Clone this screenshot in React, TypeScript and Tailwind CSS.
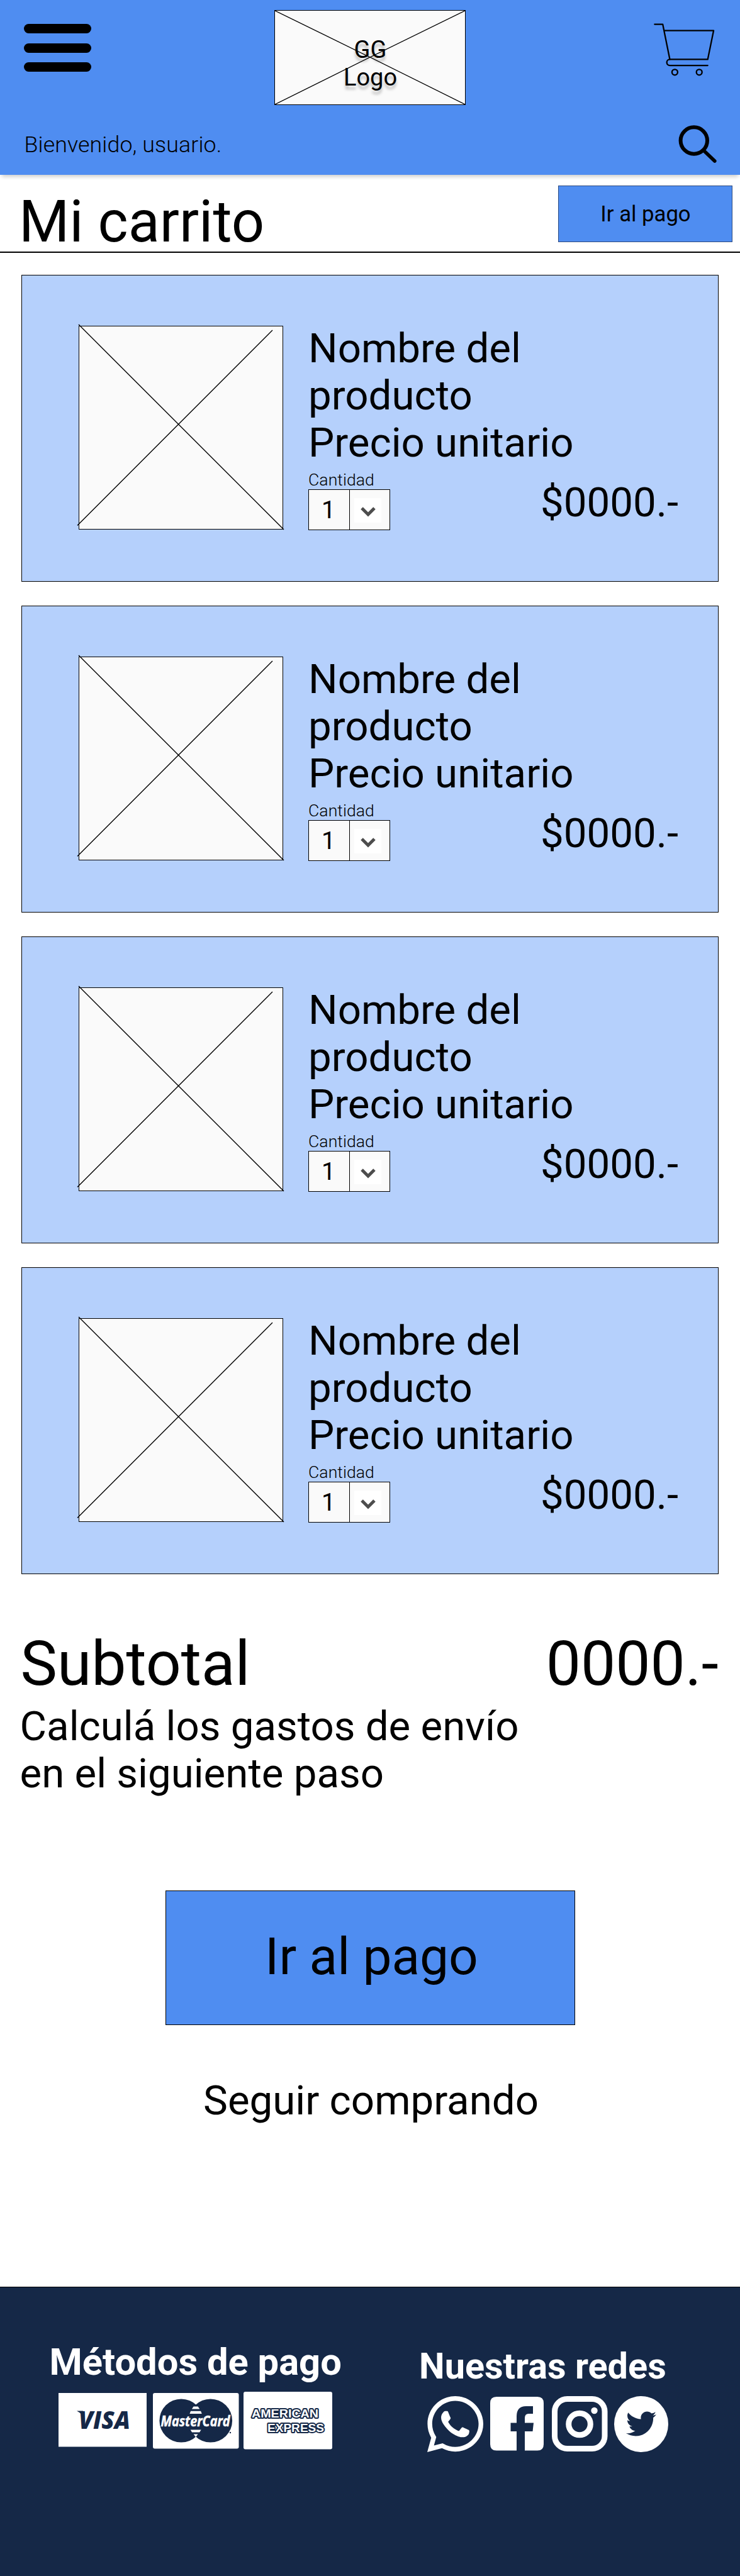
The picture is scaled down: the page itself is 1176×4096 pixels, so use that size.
import { FaTwitter, FaWhatsapp } from "react-icons/fa";

function CartIcon() {
  return (
    <svg className="mt-[37px] h-[85px] w-[98px]" viewBox="0 0 98 85" fill="none" stroke="#000" strokeWidth="2.300" strokeLinecap="round" strokeLinejoin="round">
      <path d="M2.300 1.600H15.200L26.500 57.400H86.700L96.100 11.600H18" />
      <path d="M26.500 57.400a4.850 4.850 0 0 0 0 9.700H86.700" />
      <circle cx="34.400" cy="77.800" r="4.500" />
      <circle cx="73.200" cy="77.800" r="4.500" />
    </svg>
  );
}

function SearchIcon() {
  return (
    <svg className="h-[61px] w-[61px]" viewBox="0 0 61 61" fill="none" stroke="#000" strokeLinecap="round">
      <circle cx="24.800" cy="24.500" r="21.200" strokeWidth="6" />
      <path d="M41 41L57.800 57" strokeWidth="5.600" />
    </svg>
  );
}

function Header() {
  return (
    <header className="h-[277.500px] bg-[#4f8df1] shadow-[0_6px_6px_-3px_rgba(0,0,0,0.2)]">
      <div className="flex h-[168px] items-start justify-between pr-[40px] pl-[38px]">
        <div className="mt-[38px] flex w-[107px] flex-col gap-[15.300px]">
          <div className="h-[15.300px] rounded-full bg-black" />
          <div className="h-[15.300px] rounded-full bg-black" />
          <div className="h-[15.300px] rounded-full bg-black" />
        </div>
        <div className="relative mt-[16px] ml-[-8px] h-[151px] w-[304px] border-[1.500px] border-black bg-[#fafafa]">
          <svg className="absolute inset-0 h-full w-full" viewBox="0 0 302 149" fill="none" stroke="#000" strokeWidth="1.300" preserveAspectRatio="none">
            <path d="M0 0L151 74L302 0M0 149L151 74L302 149" />
          </svg>
          <div className="relative mt-[40px] pl-[2px] text-center text-[38px] leading-[44px] [text-shadow:0_6px_4px_rgba(0,0,0,0.250)]">
            GG
            <br />
            Logo
          </div>
        </div>
        <CartIcon />
      </div>
      <div className="flex h-[109px] items-center justify-between pr-[37px] pl-[38.500px]">
        <p className="mt-[15px] text-[35.700px] leading-[40px] font-light tracking-[0.120px]">Bienvenido, usuario.</p>
        <div className="mt-[14px]">
          <SearchIcon />
        </div>
      </div>
    </header>
  );
}

function ProductCard() {
  return (
    <article className="flex h-[488px] border-[1.500px] border-black bg-[#b5d0fc]">
      <div className="relative mt-[80px] ml-[90px] h-[324px] w-[325px] shrink-0 border-[1.500px] border-black bg-[#fafafa]">
        <svg className="absolute inset-0 h-full w-full overflow-visible" viewBox="0 0 323 322" fill="none" stroke="#000" strokeWidth="1.400">
          <path d="M-1 -3L325 323M307 6L-3 316.500" />
        </svg>
      </div>
      <div className="ml-[40px] flex-1 pt-[77.500px]">
        <p className="text-[65.400px] leading-[75px]">
          Nombre del
          <br />
          producto
          <br />
          Precio unitario
        </p>
        <div className="flex justify-between pr-[63px]">
          <div className="pt-[7px]">
            <p className="text-[26.600px] leading-[30px] font-light tracking-[0.050px]">Cantidad</p>
            <div className="mt-[0.500px] flex h-[65px] w-[130px] border-[1.500px] border-black bg-[#fafafa]">
              <div className="flex w-[65px] items-center justify-center border-r-[1.500px] border-black pt-[1px] pr-[2px] text-[39px]">1</div>
              <div className="mt-[13px] ml-[7px] flex h-[39px] w-[43px] items-center justify-center bg-white">
                <svg className="mt-[5px] h-[16px] w-[24px]" viewBox="0 0 24 16" fill="none" stroke="#4d4d4d" strokeWidth="5">
                  <path d="M2 2L12 12L22 2" />
                </svg>
              </div>
            </div>
          </div>
          <p className="mt-[20.500px] text-[65.400px] leading-[75px]">$0000.-</p>
        </div>
      </div>
    </article>
  );
}

function VisaCard() {
  return (
    <svg className="mt-[2px] h-[85.500px] w-[140px]" viewBox="0 0 140 85.500">
      <rect width="140" height="85.500" fill="#fff" />
      <text x="32" y="56.500" fontFamily="Open Sans" fontWeight="800" fontStyle="italic" fontSize="39" textLength="82" lengthAdjust="spacingAndGlyphs" fill="#152847">
        VISA
      </text>
      <path d="M29 28.500h10l2 12q-4-8-12-12z" fill="#152847" />
    </svg>
  );
}

function MasterCard() {
  return (
    <svg className="mt-[2px] ml-[10px] h-[88.500px] w-[136.500px] overflow-visible" viewBox="0 0 136.500 88.500">
      <rect width="136.500" height="88.500" rx="3" fill="#fff" />
      <circle cx="45" cy="44" r="34.600" fill="#152847" />
      <circle cx="91.500" cy="44" r="34.600" fill="#152847" />
      <path d="M64.600 21.600h7l2.700 4h-12.400zM60.100 28.700h16l1.700 4.400h-19.400zM59.600 58.600h17l-2.500 4h-12zM64.600 65.500h7l-3.500 4.500z" fill="#fff" />
      <text x="12.500" y="52.500" fontFamily="Open Sans" fontWeight="700" fontStyle="italic" fontSize="23.500" textLength="110" lengthAdjust="spacingAndGlyphs" fill="#fff" stroke="#fff" strokeWidth="0.500">
        MasterCard
      </text>
      <circle cx="123" cy="63" r="1.200" fill="#152847" />
    </svg>
  );
}

function AmexCard() {
  return (
    <svg className="ml-[7px] h-[91.500px] w-[141px]" viewBox="0 0 141 91.500">
      <rect width="141" height="91.500" rx="3" fill="#fff" />
      <g fontFamily="Liberation Sans" fontWeight="700" fontSize="18.600" fill="#fff" stroke="#152847" strokeWidth="3.800" strokeLinejoin="round" paintOrder="stroke">
        <text x="13" y="41.300" textLength="106" lengthAdjust="spacingAndGlyphs">
          AMERICAN
        </text>
        <text x="38" y="64.300" textLength="90" lengthAdjust="spacingAndGlyphs">
          EXPRESS
        </text>
      </g>
    </svg>
  );
}

function SocialIcons() {
  return (
    <div className="mt-[12.500px] ml-[13.500px] flex items-start text-white">
      <FaWhatsapp className="-mx-[0.500px] h-[89px] w-[89px]" viewBox="0 32 448 448" />
      <svg className="mt-[1.500px] ml-[11px] h-[85.500px] w-[85px]" viewBox="0 0 85 85.500" fill="#fff">
        <path d="M10 0H75Q85 0 85 10V75.500Q85 85.500 75 85.500H55V55H67.500L69 41.500H55V34Q55 27 61 27H68V15H57Q42 15 42 31V41.500H32.500V55H42V85.500H10Q0 85.500 0 75.500V10Q0 0 10 0Z" />
      </svg>
      <svg className="ml-[13.500px] h-[88px] w-[88.500px]" viewBox="0 0 88.500 88" fill="none" stroke="#fff">
        <rect x="4.500" y="4.500" width="79.500" height="79" rx="20" strokeWidth="9" />
        <circle cx="44" cy="44.500" r="17.300" strokeWidth="9" />
        <circle cx="67.500" cy="23" r="5.200" fill="#fff" stroke="none" />
      </svg>
      <div className="ml-[10px] flex h-[89px] w-[86.500px] items-center justify-center rounded-[50%] bg-white">
        <FaTwitter className="h-[48px] w-[48px] text-[#152847]" />
      </div>
    </div>
  );
}

function Footer() {
  return (
    <footer className="mt-auto flex h-[460px] justify-between border-t-[1.500px] border-black bg-[#152847] text-white">
      <section className="pt-[84px] pl-[78.500px]">
        <h2 className="text-[59.700px] leading-[70px] font-bold whitespace-nowrap">Métodos de pago</h2>
        <div className="mt-[12px] ml-[14.500px] flex items-start">
          <VisaCard />
          <MasterCard />
          <AmexCard />
        </div>
      </section>
      <section className="w-[510px] pt-[92px]">
        <h2 className="text-[57.600px] leading-[68px] font-bold whitespace-nowrap">Nuestras redes</h2>
        <SocialIcons />
      </section>
    </footer>
  );
}

export default function App() {
  return (
    <div className="flex h-[4096px] w-[1176px] flex-col overflow-hidden bg-white font-['Roboto',sans-serif] text-black">
      <Header />
      <div className="flex h-[124px] shrink-0 items-start justify-between border-b-2 border-black pr-[12.500px] pl-[30px]">
        <h1 className="mt-[21.500px] text-[92px] leading-[108px]">Mi carrito</h1>
        <button className="mt-[17.500px] h-[90px] w-[277px] border border-[#2c4a80] bg-[#4f8df1] pl-[2px] text-[34.700px]">Ir al pago</button>
      </div>
      <main className="flex flex-col px-[34px] pt-[35.500px]">
        <div className="flex flex-col gap-[38px]">
          <ProductCard />
          <ProductCard />
          <ProductCard />
          <ProductCard />
        </div>
        <div className="mt-[85px] -ml-[1.500px] flex justify-between text-[98.400px] leading-[115px]">
          <span>Subtotal</span>
          <span>0000.-</span>
        </div>
        <p className="mt-[4px] -ml-[2.500px] text-[65.400px] leading-[75px]">
          Calculá los gastos de envío
          <br />
          en el siguiente paso
        </p>
        <button className="mt-[149px] h-[214px] w-[651px] self-center border-[1.500px] border-black bg-[#4f8df1] pb-[3px] pl-[5px] text-[82px]">Ir al pago</button>
        <a className="mt-[82px] self-center pl-[3px] text-[65.400px] leading-[75px]">Seguir comprando</a>
      </main>
      <Footer />
    </div>
  );
}
